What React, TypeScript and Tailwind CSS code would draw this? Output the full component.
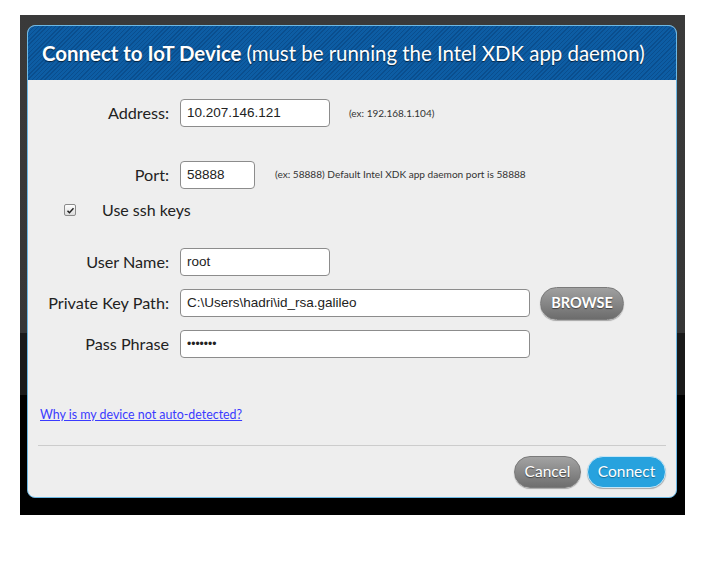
export default function App() {
  return (
    <div className="min-h-screen bg-white pt-[15px] pl-[20px]">
      <div className="w-[665px] h-[500px] pt-[10px] pl-[7px] bg-[linear-gradient(#3a3a3a_0px,#363636_318px,#1a1a1a_318px,#1a1a1a_380px,#000_380px)]">
        <div className="w-[650px] h-[473px] flex flex-col rounded-[8px] border border-[#6cb8e4] bg-[#eeeeee] overflow-hidden font-['Lato',sans-serif] text-[#222]">
          {/* Header */}
          <div className="h-[54px] shrink-0 flex items-center pl-[14px] text-white text-[20.4px] [text-shadow:0_1px_1px_rgba(0,0,0,0.6)] bg-[repeating-linear-gradient(-45deg,#0d5da4_0px,#0d5da4_2px,#0a4e8e_2px,#0a4e8e_3px)]">
            <span className="font-bold">Connect to IoT Device</span>
            <span className="ml-[5px]">(must be running the Intel XDK app daemon)</span>
          </div>

          {/* Body */}
          <div className="flex flex-col pt-[19px]">
            <Row label="Address:">
              <Field value="10.207.146.121" w="w-[150px]" />
              <span className="ml-[19px] text-[10px] text-[#333]">(ex: 192.168.1.104)</span>
            </Row>

            <div className="mt-[34px]">
              <Row label="Port:">
                <Field value="58888" w="w-[75px]" />
                <span className="ml-[20px] text-[10.1px] text-[#333]">
                  (ex: 58888) Default Intel XDK app daemon port is 58888
                </span>
              </Row>
            </div>

            <div className="mt-[11px] h-[20px] flex items-center pl-[36px]">
              <span className="w-[12px] h-[12px] flex items-center justify-center rounded-[2px] border border-[#8a8a8a] bg-[linear-gradient(#fdfdfd,#dcdcdc)]">
                <svg viewBox="0 0 12 12" className="w-[9px] h-[9px]" aria-hidden="true">
                  <path d="M2 6.3l2.6 2.6L10 3" fill="none" stroke="#222" strokeWidth="2" />
                </svg>
              </span>
              <span className="ml-[26px] text-[16px]">Use ssh keys</span>
            </div>

            <div className="mt-[28px]">
              <Row label="User Name:">
                <Field value="root" w="w-[150px]" />
              </Row>
            </div>

            <div className="mt-[13px]">
              <Row label="Private Key Path:">
                <Field value="C:\Users\hadri\id_rsa.galileo" w="w-[350px]" />
                <button className="ml-[10px] h-[33px] w-[84px] rounded-full border border-[#7a7a7a] bg-[linear-gradient(#a0a0a0,#6c6c6c)] text-white text-[14.5px] font-bold [text-shadow:0_1px_1px_rgba(0,0,0,0.5)] shadow-[0_1px_1px_rgba(0,0,0,0.3)]">
                  BROWSE
                </button>
              </Row>
            </div>

            <div className="mt-[13px]">
              <Row label="Pass Phrase">
                <Field value="•••••••" w="w-[350px]" small />
              </Row>
            </div>

            <a
              href="#"
              className="mt-[49px] ml-[12px] text-[12.4px] leading-[15px] text-[#3a3aff] underline"
            >
              Why is my device not auto-detected?
            </a>

            <div className="mt-[23px] mx-[10px] border-t border-[#cccccc]" />

            <div className="mt-[10px] pr-[10px] flex justify-end gap-[6px]">
              <button className="h-[32px] w-[67px] rounded-full border border-[#7a7a7a] bg-[linear-gradient(#a3a3a3,#6e6e6e)] text-white text-[15.5px] [text-shadow:0_1px_1px_rgba(0,0,0,0.5)] shadow-[0_1px_1px_rgba(0,0,0,0.3)]">
                Cancel
              </button>
              <button className="h-[32px] w-[79px] rounded-full border border-[#c4e6f7] bg-[#27a2de] text-white text-[15.5px] [text-shadow:0_1px_1px_rgba(0,0,0,0.35)] shadow-[0_1px_1px_rgba(0,0,0,0.3)]">
                Connect
              </button>
            </div>
          </div>
        </div>
      </div>
    </div>
  );
}

function Row({ label, children }: { label: string; children: React.ReactNode }) {
  return (
    <div className="h-[28px] flex items-center">
      <label className="w-[142px] shrink-0 text-right text-[16.2px] pr-px">{label}</label>
      <div className="ml-[10px] flex items-center">{children}</div>
    </div>
  );
}

function Field({ value, w, small }: { value: string; w: string; small?: boolean }) {
  return (
    <div
      className={`${w} h-[28px] flex items-center px-[6px] bg-white rounded-[4px] border border-[#8c8c8c] font-['Liberation_Sans',Arial,sans-serif] text-[#222] ${
        small ? "text-[12px]" : "text-[13.5px]"
      }`}
    >
      {value}
    </div>
  );
}
